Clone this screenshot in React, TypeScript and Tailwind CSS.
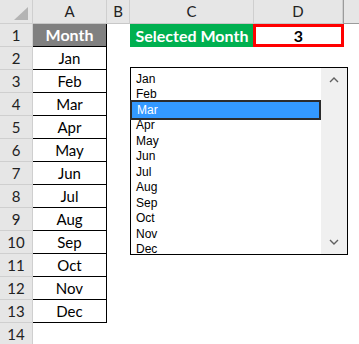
import React from "react";

const months = ["Jan", "Feb", "Mar", "Apr", "May", "Jun", "Jul", "Aug", "Sep", "Oct", "Nov", "Dec"];

const sheetFont = { fontFamily: "Lato, 'Liberation Sans', sans-serif" };

const HeaderCell = ({ children, last }: { children?: React.ReactNode; last?: boolean }) => (
    <div
        className={`flex items-center justify-center bg-[#e6e6e6] border-b border-[#c8c8c8] text-[15px] text-[#222] ${
            last ? "border-l border-l-[#9b9b9b] border-b-[#9b9b9b]" : "border-r border-r-[#cfcfcf]"
        }`}
    >
        {children}
    </div>
);

const RowNumber = ({ n }: { n: number }) => (
    <div className="flex items-center justify-center bg-[#e6e6e6] border-b border-r border-[#cfcfcf] text-[15px] text-[#222]">
        {n}
    </div>
);

const Chevron = ({ up }: { up?: boolean }) => (
    <svg width="10" height="6" viewBox="0 0 10 6" className="text-[#606060]">
        <polyline
            points={up ? "1,5 5,1 9,5" : "1,1 5,5 9,1"}
            fill="none"
            stroke="currentColor"
            strokeWidth="1.4"
        />
    </svg>
);

const MonthList = () => (
    <div
        className="absolute left-[130px] top-[67px] w-[218px] h-[188px] flex bg-white border border-black"
        style={{ fontFamily: "'Liberation Sans', Arial, sans-serif" }}
    >
        <div className="flex-1 flex flex-col pt-[3px]">
            {months.map((m) =>
                m === "Mar" ? (
                    <div
                        key={m}
                        className="relative -ml-px -my-[2px] h-[19.5px] flex items-center pl-[5px] bg-[#3399ff] border-2 border-[#2b2b2b] text-white text-[12px]"
                    >
                        {m}
                    </div>
                ) : (
                    <div key={m} className="h-[15.5px] flex items-center pl-[5px] text-[12px] text-black">
                        {m}
                    </div>
                )
            )}
        </div>
        <div className="w-[26px] bg-[#f0f0f0] flex flex-col items-center justify-between py-[9px]">
            <Chevron up />
            <Chevron />
        </div>
    </div>
);

export default function App() {
    const rows = Array.from({ length: 14 }, (_, i) => i + 1);

    return (
        <div className="relative w-[359px] h-[344px] overflow-hidden bg-white" style={sheetFont}>
            <div className="grid grid-cols-[33px_74px_23px_124px_89px_16px] grid-rows-[24px_repeat(14,23px)]">
                {/* corner */}
                <div className="relative bg-[#e6e6e6] border-b border-r border-[#cfcfcf]">
                    <svg width="16" height="14" viewBox="0 0 16 14" className="absolute right-[3px] bottom-[2px]">
                        <polygon points="15,0 15,13 1,13" fill="#b4b4b4" />
                    </svg>
                </div>
                <HeaderCell>A</HeaderCell>
                <HeaderCell>B</HeaderCell>
                <HeaderCell>C</HeaderCell>
                <HeaderCell>D</HeaderCell>
                <HeaderCell last />

                {rows.map((r) => (
                    <React.Fragment key={r}>
                        <RowNumber n={r} />
                        {r === 1 ? (
                            <div className="flex items-center justify-center bg-[#808080] border-b border-r border-black text-white font-bold text-[16px]">
                                Month
                            </div>
                        ) : r <= 13 ? (
                            <div className="flex items-center justify-center border-b border-r border-black text-[15px] text-black">
                                {months[r - 2]}
                            </div>
                        ) : (
                            <div />
                        )}
                        <div />
                        {r === 1 ? (
                            <div className="flex items-center justify-center bg-[#00b050] text-white font-bold text-[16px]">
                                Selected Month
                            </div>
                        ) : (
                            <div />
                        )}
                        {r === 1 ? (
                            <div className="flex items-center justify-center -ml-px -mr-px border-[3px] border-[#ff0000] font-bold text-[16px] text-black">
                                3
                            </div>
                        ) : (
                            <div />
                        )}
                        <div />
                    </React.Fragment>
                ))}
            </div>
            <MonthList />
        </div>
    );
}
